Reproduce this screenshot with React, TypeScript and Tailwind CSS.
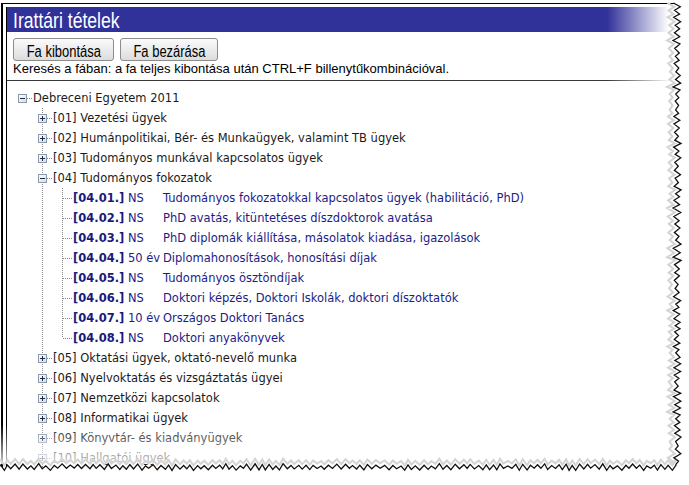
import React from "react";

type Leaf = { code: string; tag: string; text: string };
type Branch = { code: string; text: string; open?: boolean; leaves?: Leaf[] };

const branches: Branch[] = [
    { code: "[01]", text: "Vezetési ügyek" },
    { code: "[02]", text: "Humánpolitikai, Bér- és Munkaügyek, valamint TB ügyek" },
    { code: "[03]", text: "Tudományos munkával kapcsolatos ügyek" },
    {
        code: "[04]",
        text: "Tudományos fokozatok",
        open: true,
        leaves: [
            { code: "[04.01.]", tag: "NS", text: "Tudományos fokozatokkal kapcsolatos ügyek (habilitáció, PhD)" },
            { code: "[04.02.]", tag: "NS", text: "PhD avatás, kitüntetéses díszdoktorok avatása" },
            { code: "[04.03.]", tag: "NS", text: "PhD diplomák kiállítása, másolatok kiadása, igazolások" },
            { code: "[04.04.]", tag: "50 év", text: "Diplomahonosítások, honosítási díjak" },
            { code: "[04.05.]", tag: "NS", text: "Tudományos ösztöndíjak" },
            { code: "[04.06.]", tag: "NS", text: "Doktori képzés, Doktori Iskolák, doktori díszoktatók" },
            { code: "[04.07.]", tag: "10 év", text: "Országos Doktori Tanács" },
            { code: "[04.08.]", tag: "NS", text: "Doktori anyakönyvek" },
        ],
    },
    { code: "[05]", text: "Oktatási ügyek, oktató-nevelő munka" },
    { code: "[06]", text: "Nyelvoktatás és vizsgáztatás ügyei" },
    { code: "[07]", text: "Nemzetközi kapcsolatok" },
    { code: "[08]", text: "Informatikai ügyek" },
    { code: "[09]", text: "Könyvtár- és kiadványügyek" },
    { code: "[10]", text: "Hallgatói ügyek" },
];

// one 20x20 connector cell of the tree
function Cell({ v, h, box }: { v?: "full" | "top"; h?: boolean; box?: "plus" | "minus" }) {
    return (
        <svg width="20" height="20" className="shrink-0" shapeRendering="crispEdges">
            {v && (
                <line x1="10.5" y1="0" x2="10.5" y2={v === "full" ? 20 : 10} stroke="#8a8a8a" strokeDasharray="1 1" />
            )}
            {h && <line x1="11" y1="10.5" x2="20" y2="10.5" stroke="#8a8a8a" strokeDasharray="1 1" />}
            {box && (
                <>
                    <defs>
                        <linearGradient id="bx" x1="0" y1="0" x2="1" y2="1">
                            <stop offset="0" stopColor="#ffffff" />
                            <stop offset="1" stopColor="#d8dce6" />
                        </linearGradient>
                    </defs>
                    <rect x="6.5" y="6.5" width="8" height="8" fill="url(#bx)" stroke="#8b97ab" />
                    <line x1="8" y1="10.5" x2="13" y2="10.5" stroke="#1f2a3a" />
                    {box === "plus" && <line x1="10.5" y1="8" x2="10.5" y2="13" stroke="#1f2a3a" />}
                </>
            )}
        </svg>
    );
}

const rnd = (i: number) => {
    const x = Math.sin(i * 12.9898 + 78.233) * 43758.5453;
    return x - Math.floor(x);
};

const rightPts: [number, number][] = [];
for (let i = 0, y = 3; y < 468; i++, y += 3 + rnd(i + 50) * 1.6) {
    rightPts.push([677 + (i % 2 ? 2.6 : -2.6) + (rnd(i) - 0.5) * 3, y]);
}
const bottomPts: [number, number][] = [];
for (let i = 0, x = 676; x > -4; i++, x -= 3 + rnd(i + 900) * 1.6) {
    bottomPts.push([x, 467 + (i % 2 ? 2.2 : -2.2) + (rnd(i + 300) - 0.5) * 2.5]);
}
const fmt = (pts: number[][]) => pts.map(([x, y]) => `${x.toFixed(1)},${y.toFixed(1)}`).join(" ");
const edgeStr = fmt([...rightPts, ...bottomPts]);
const shadowStr = fmt([...rightPts.map(([x, y]) => [x - 6, y]), ...bottomPts.map(([x, y]) => [x, y - 5])]);
const outsideStr = `${edgeStr} 0,485 689,485 689,0 ${rightPts[0][0].toFixed(1)},0`;

export default function App() {
    const narrow = "font-['Liberation_Sans',Arial,sans-serif]";
    return (
        <div className="relative h-[485px] w-[689px] overflow-hidden bg-white">
            <div className="ml-[1px] mt-[3px] h-[480px] border-l-2 border-t border-black pl-[3px] pt-[3px]">
                <div className="h-full border-l border-black">
                    <div className="h-[25px] w-[670px] bg-[linear-gradient(to_right,#31319a_0px,#31319a_600px,#ffffff_662px)] pl-[6px]">
                        <span className={`${narrow} inline-block origin-left scale-x-[0.8] text-[22px] leading-[27px] text-white`}>
                            Irattári tételek
                        </span>
                    </div>

                    <div className="mt-[6px] flex gap-[6px] pl-[6px]">
                        <button className="h-[23px] w-[101px] rounded-[3px] border border-[#8c8c8c] bg-[linear-gradient(#fbfbfb,#dcdcdc)]">
                            <span className={`${narrow} inline-block scale-x-[0.81] text-[16px] leading-[20px] text-black`}>Fa kibontása</span>
                        </button>
                        <button className="h-[23px] w-[98px] rounded-[3px] border border-[#8c8c8c] bg-[linear-gradient(#fbfbfb,#dcdcdc)]">
                            <span className={`${narrow} inline-block scale-x-[0.81] text-[16px] leading-[20px] text-black`}>Fa bezárása</span>
                        </button>
                    </div>

                    <div className="h-[16px] pl-[6px] font-['Liberation_Sans',Arial,sans-serif] text-[13px] leading-[16px] text-black">
                        Keresés a fában: a fa teljes kibontása után CTRL+F billenytűkombinációval.
                    </div>

                    <div className="mt-[3px] h-px w-[670px] bg-[linear-gradient(to_right,#3a3a3a_0px,#3a3a3a_600px,rgba(58,58,58,0)_665px)]" />

                    <div className="mt-[7px] pl-[5px] font-['DejaVu_Sans',Verdana,sans-serif] text-[11.5px] leading-[20px]">
                        <div className="flex h-[20px] items-center text-[#1a1a1a]">
                            <Cell h box="minus" />
                            <span className="ml-px">Debreceni Egyetem 2011</span>
                        </div>
                        {branches.map((b) => (
                            <React.Fragment key={b.code}>
                                <div className="flex h-[20px] items-center text-[#1a1a1a]">
                                    <Cell />
                                    <Cell v="full" h box={b.open ? "minus" : "plus"} />
                                    <span className="ml-px">
                                        {b.code} {b.text}
                                    </span>
                                </div>
                                {b.leaves?.map((l, i) => (
                                    <div key={l.code} className="flex h-[20px] items-center text-[#1c1c86]">
                                        <Cell />
                                        <Cell v="full" />
                                        <Cell v={i === b.leaves!.length - 1 ? "top" : "full"} h />
                                        <span className="ml-px w-[55px] shrink-0 font-bold text-[#1a1a78]">{l.code}</span>
                                        <span className="w-[35px] shrink-0">{l.tag}</span>
                                        <span>{l.text}</span>
                                    </div>
                                ))}
                            </React.Fragment>
                        ))}
                    </div>
                </div>
            </div>

            {/* bottom fade of the torn screenshot */}
            <div className="pointer-events-none absolute left-0 top-[424px] h-[40px] w-full bg-[linear-gradient(rgba(255,255,255,0),rgba(255,255,255,0.78))]" />

            <svg className="pointer-events-none absolute left-0 top-0" width="689" height="485">
                <polygon points={outsideStr} fill="#ffffff" />
                <polyline points={shadowStr} fill="none" stroke="#d4d4d4" strokeWidth="2" />
                <polyline points={edgeStr} fill="none" stroke="#111" strokeWidth="1.3" />
            </svg>
        </div>
    );
}
